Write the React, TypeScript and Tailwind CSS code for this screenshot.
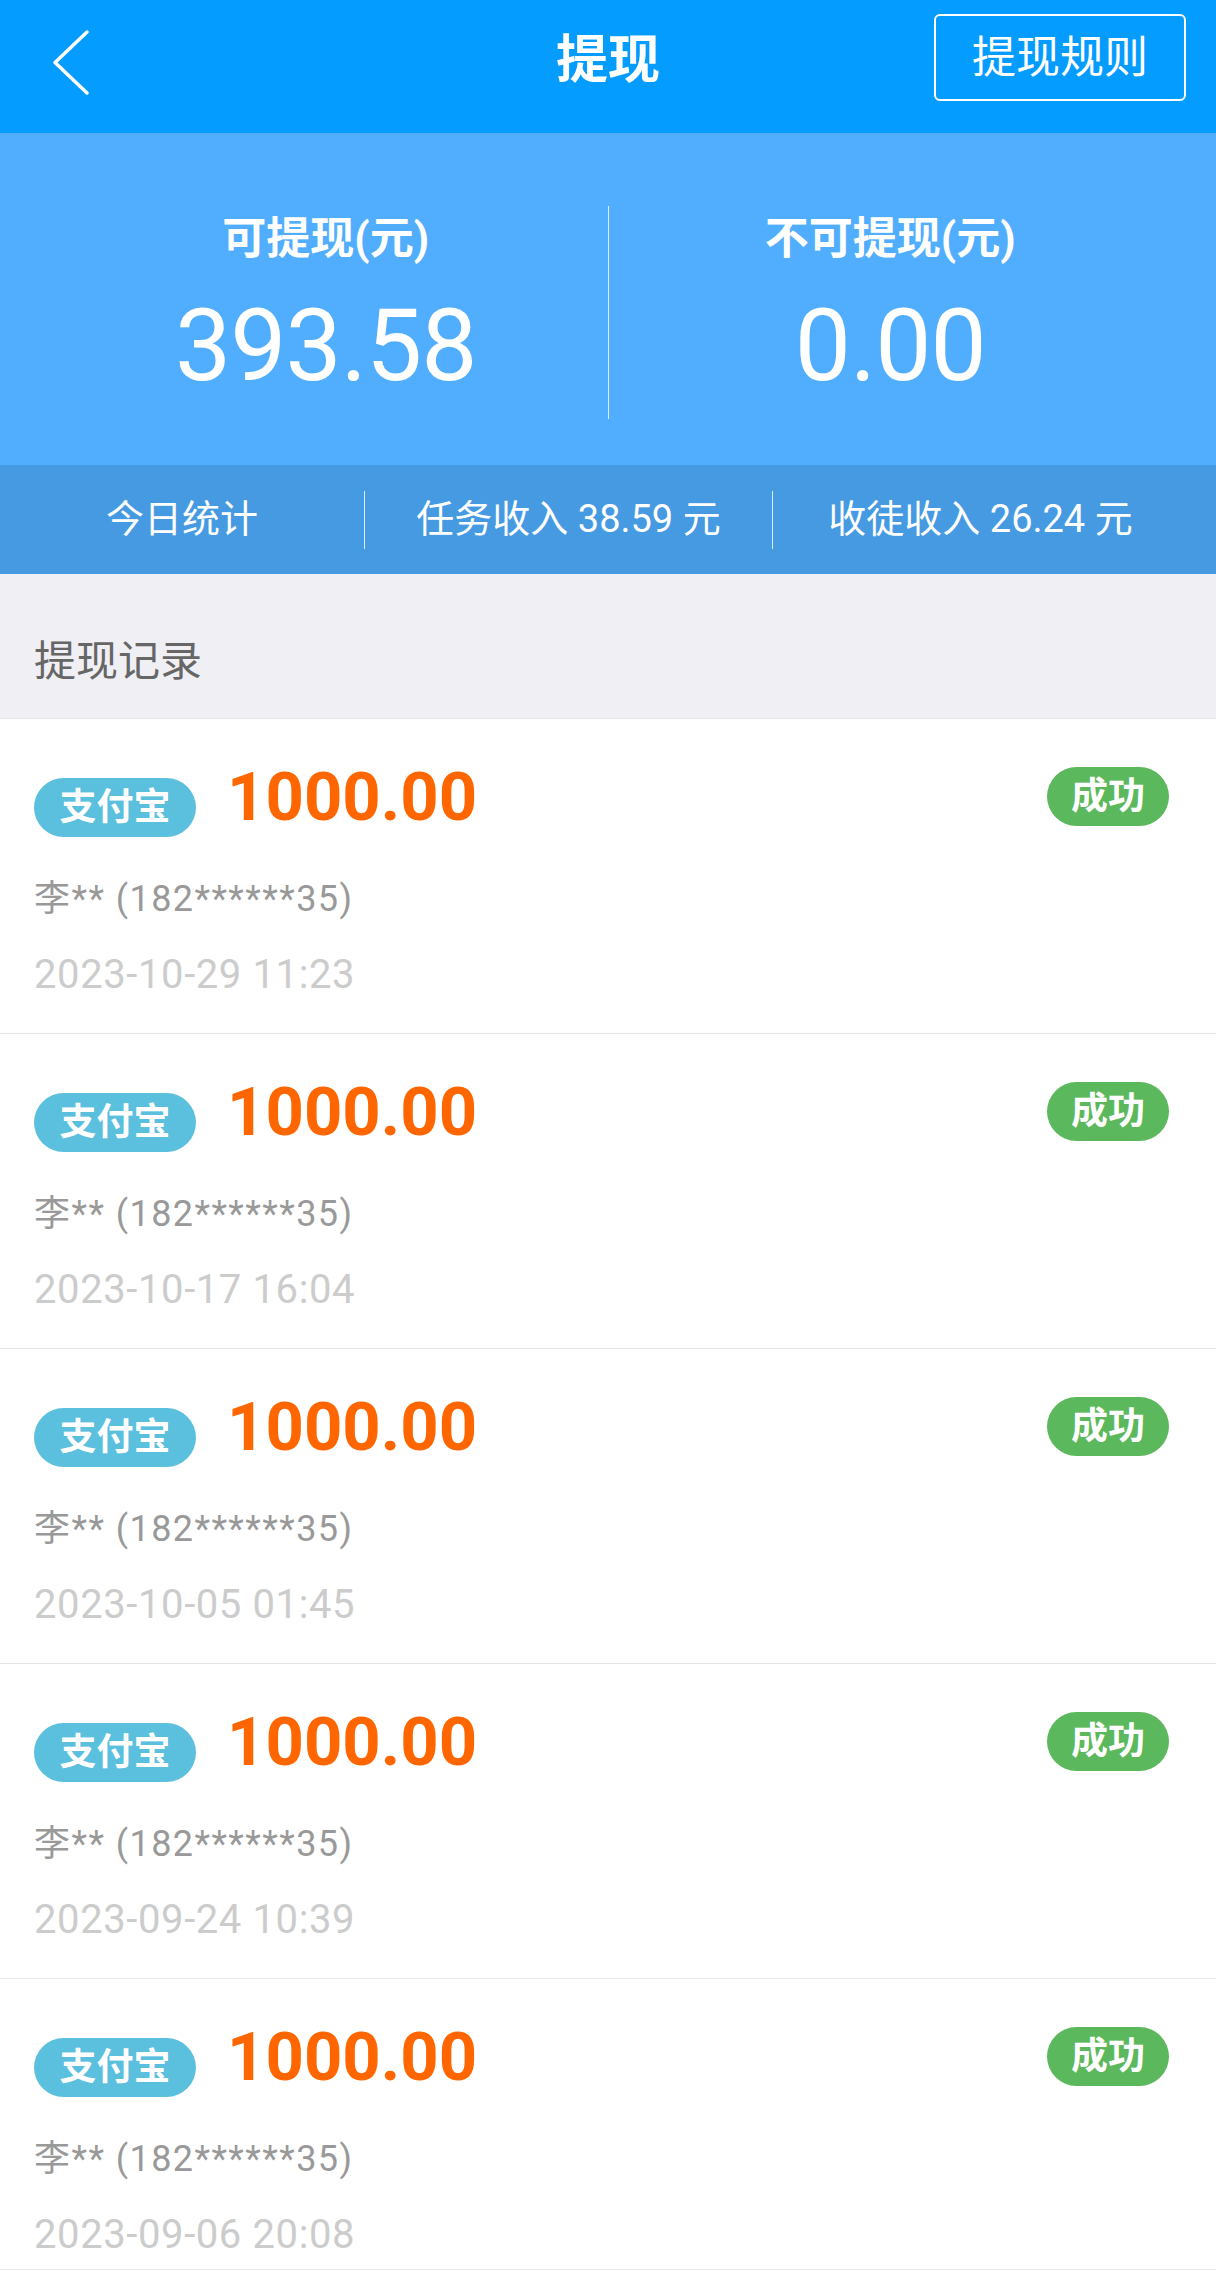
import type { ReactNode } from "react";

const font = "font-['Roboto','Noto_Sans_CJK_SC',sans-serif]";

const records = [
  { amount: "1000.00", name: "李** (182******35)", time: "2023-10-29 11:23" },
  { amount: "1000.00", name: "李** (182******35)", time: "2023-10-17 16:04" },
  { amount: "1000.00", name: "李** (182******35)", time: "2023-10-05 01:45" },
  { amount: "1000.00", name: "李** (182******35)", time: "2023-09-24 10:39" },
  { amount: "1000.00", name: "李** (182******35)", time: "2023-09-06 20:08" },
];

function BackIcon() {
  return (
    <svg width="40" height="70" viewBox="0 0 40 70" fill="none" className="mt-[27px] ml-[50px]">
      <path d="M37 5 L5 35.5 L37 66" stroke="white" strokeWidth="3.5" strokeLinecap="round" strokeLinejoin="round" />
    </svg>
  );
}

function Header() {
  return (
    <header className="grid h-[133px] grid-cols-[1fr_auto_1fr] items-start bg-[#049cff] text-white">
      <div>
        <BackIcon />
      </div>
      <h1 className="mt-[31px] text-[52px] font-bold leading-[60px]">提现</h1>
      <div className="flex justify-end pr-[30px]">
        <button className="mt-[14px] flex h-[87px] w-[252px] items-center justify-center rounded-[6px] border-2 border-white text-[44px] leading-[50px]">
          提现规则
        </button>
      </div>
    </header>
  );
}

function Balance({ label, value }: { label: string; value: string }) {
  return (
    <div className="flex flex-1 flex-col items-center pt-[78px]">
      <div className="text-[44px] font-bold leading-[56px]">{label}</div>
      <div className="mt-[29px] text-[100px] leading-[100px] tracking-[-0.01em]">{value}</div>
    </div>
  );
}

function Summary() {
  return (
    <section className="flex h-[332px] items-start bg-[#51aefe] px-[44px] text-white">
      <Balance label="可提现(元)" value="393.58" />
      <div className="mt-[73px] h-[213px] w-px bg-white/80" />
      <Balance label="不可提现(元)" value="0.00" />
    </section>
  );
}

function StatCell({ children, className }: { children: ReactNode; className?: string }) {
  return <div className={"text-center " + (className ?? "")}>{children}</div>;
}

function TodayStats() {
  return (
    <section className="flex h-[109px] items-center bg-[#469ae2] text-[38px] leading-[109px] text-white">
      <StatCell className="w-[364px]">今日统计</StatCell>
      <div className="h-[58px] w-px bg-white/80" />
      <StatCell className="w-[407px]">任务收入 38.59 元</StatCell>
      <div className="h-[58px] w-px bg-white/80" />
      <StatCell className="flex-1 pr-[28px]">收徒收入 26.24 元</StatCell>
    </section>
  );
}

function RecordRow({ amount, name, time, last }: { amount: string; name: string; time: string; last?: boolean }) {
  return (
    <li className={"border-t border-[#e5e5e5] bg-white pl-[34px] pr-[47px] pt-[44px] " + (last ? "border-b pb-[9px]" : "pb-[33px]")}>
      <div className="flex items-start justify-between">
        <div className="flex items-baseline gap-[31px]">
          <span className="h-[59px] w-[162px] rounded-full bg-[#5bc0de] text-center text-[37px] font-bold leading-[59px] text-white">
            支付宝
          </span>
          <span className="text-[67px] font-bold leading-[68px] text-[#ff6600]">{amount}</span>
        </div>
        <span className="mt-[4px] h-[59px] w-[122px] rounded-full bg-[#5cb85c] text-center text-[37px] font-bold leading-[59px] text-white">
          成功
        </span>
      </div>
      <div className="mt-[37px] text-[36px] leading-[50px] tracking-[0.04em] text-[#999999]">{name}</div>
      <div className="mt-[26px] text-[40px] leading-[50px] tracking-[0.015em] text-[#cccccc]">{time}</div>
    </li>
  );
}

export default function App() {
  return (
    <div className={"h-[2271px] w-[1216px] overflow-hidden bg-white " + font}>
      <Header />
      <Summary />
      <TodayStats />
      <div className="h-[144px] bg-[#efeff4] pl-[34px] pt-[58px] text-[42px] leading-[60px] text-[#666666]">提现记录</div>
      <ul>
        {records.map((r, i) => (
          <RecordRow key={r.time} {...r} last={i === records.length - 1} />
        ))}
      </ul>
    </div>
  );
}
